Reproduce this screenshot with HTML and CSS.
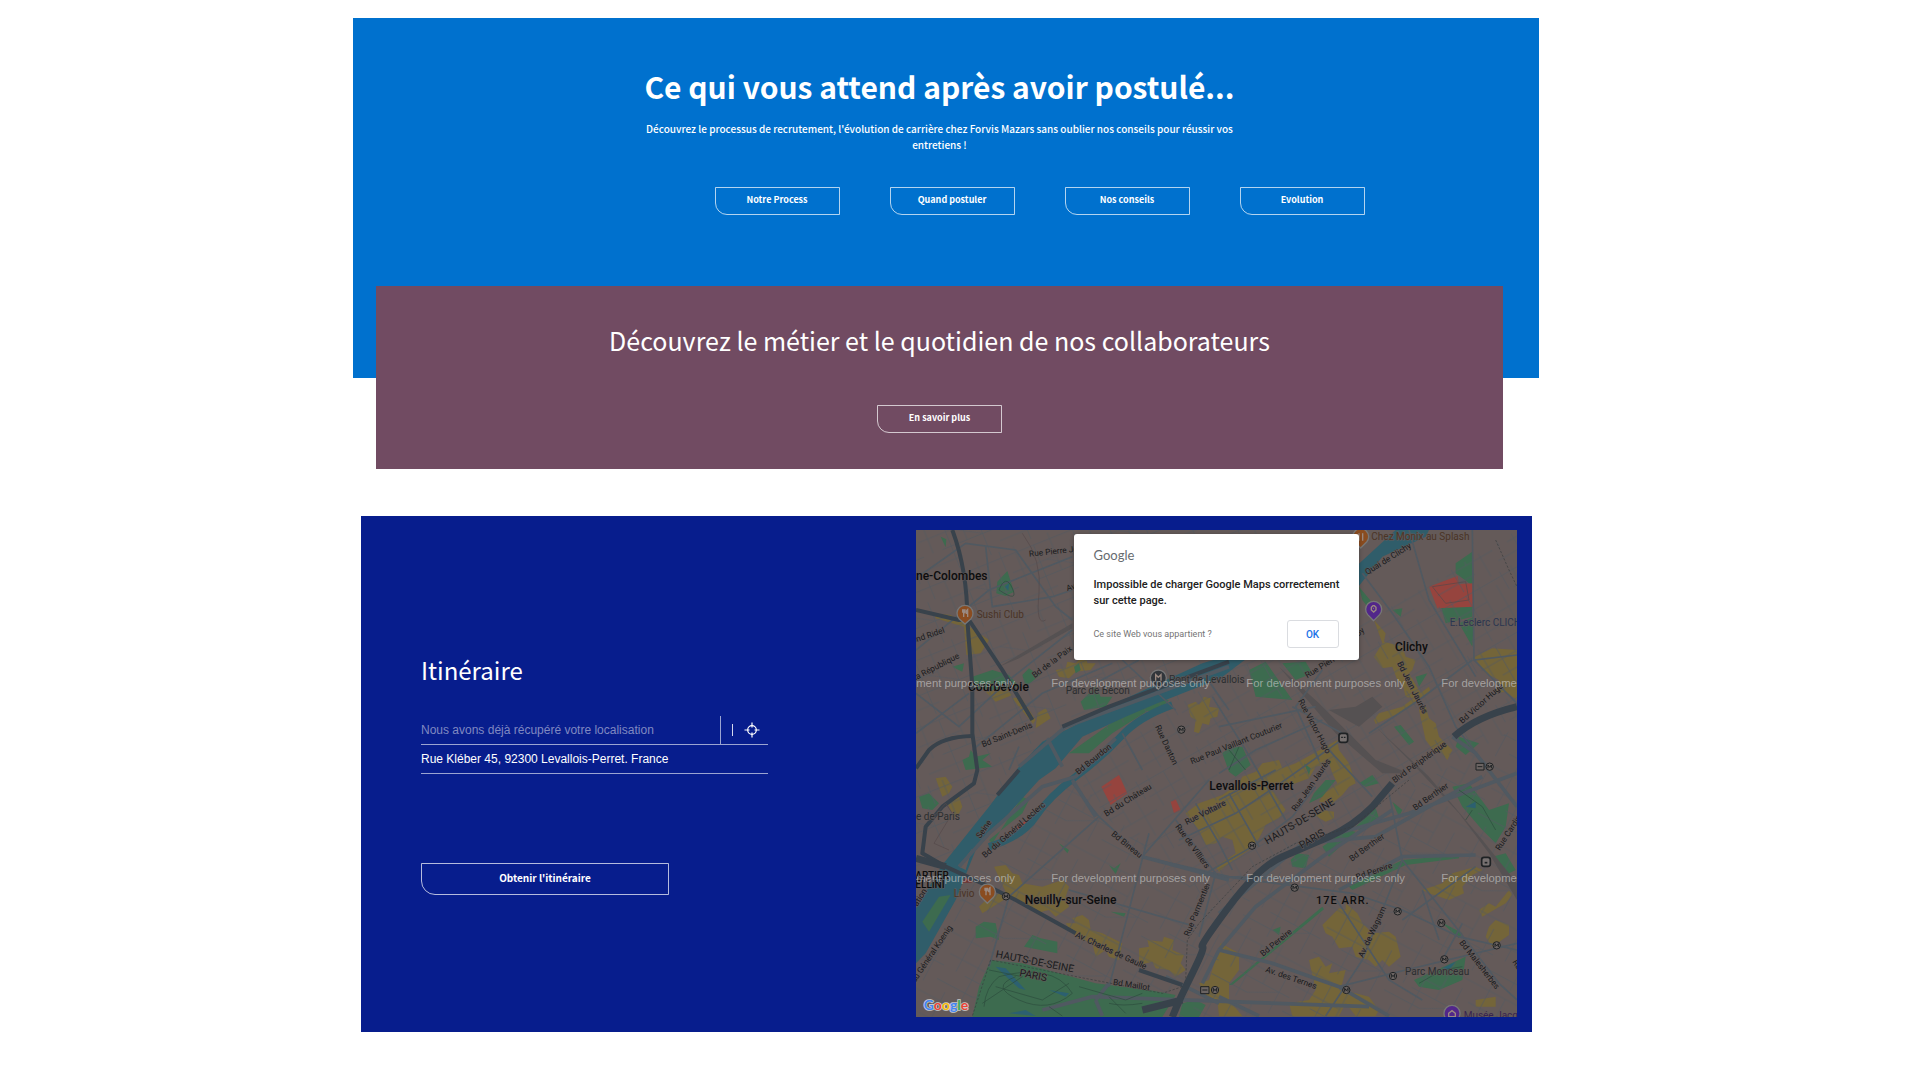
FILE: index.html
```html
<!DOCTYPE html>
<html lang="fr">
<head>
<meta charset="utf-8">
<meta name="viewport" content="width=device-width, initial-scale=1">
<title>Forvis Mazars – Après avoir postulé</title>
<link rel="stylesheet" href="styles.css">
</head>
<body>
<main class="page">
  <section class="hero">
    <div class="hero-inner">
      <h1 class="hero-title">Ce qui vous attend après avoir postulé...</h1>
      <p class="hero-text">Découvrez le processus de recrutement, l'évolution de carrière chez Forvis Mazars sans oublier nos conseils pour réussir vos entretiens !</p>
      <nav class="hero-links">
        <a class="btn" href="#process">Notre Process</a>
        <a class="btn" href="#postuler">Quand postuler</a>
        <a class="btn" href="#conseils">Nos conseils</a>
        <a class="btn" href="#evolution">Evolution</a>
      </nav>
    </div>
  </section>

  <section class="jobs">
    <h2 class="jobs-title">Découvrez le métier et le quotidien de nos collaborateurs</h2>
    <a class="btn" href="#metiers">En savoir plus</a>
  </section>

  <section class="route">
    <form class="route-form">
      <h2 class="route-title">Itinéraire</h2>
      <div class="field">
        <input class="field-input" type="text" aria-label="Point de départ" placeholder="Nous avons déjà récupéré votre localisation">
        <button class="locate" type="button" aria-label="Me localiser">
          <span class="locate-bar"></span>
          <svg class="locate-icon" viewBox="0 0 16 16" fill="none" stroke="currentColor" stroke-width="1.2"><circle cx="8" cy="8" r="4.3"/><path d="M8 .5v5M8 10.500v5M.5 8h5M10.500 8h5"/></svg>
        </button>
      </div>
      <p class="address">Rue Kléber 45, 92300 Levallois-Perret. France</p>
      <button class="btn btn-wide" type="button">Obtenir l'itinéraire</button>
    </form>

    <div class="map">
      <svg class="map-canvas" viewBox="21 30 1803 1461" preserveAspectRatio="xMidYMid slice">
        <defs>
          <pattern id="streets-a" width="230" height="190" patternUnits="userSpaceOnUse" patternTransform="rotate(-22)">
            <path class="minor" d="M0 20H230M0 74H140M60 120H230M0 160H110M30 0V120M88 20V190M140 0V120M190 60V190M214 0V60M110 74L190 120"/>
          </pattern>
          <pattern id="streets-b" width="210" height="170" patternUnits="userSpaceOnUse" patternTransform="rotate(-30)">
            <path class="minor" d="M0 14H210M0 60H120M50 104H210M0 140H130M24 0V104M74 14V170M120 0V104M168 30V170M196 0V60"/>
          </pattern>
          <pattern id="streets-c" width="240" height="200" patternUnits="userSpaceOnUse" patternTransform="rotate(28)">
            <path class="minor" d="M0 30H240M0 90H150M70 130H240M0 175H120M40 0V130M95 30V200M150 0V130M205 60V200M120 175L205 130"/>
          </pattern>
          <g id="metro"><circle r="11"/><path d="M-5 5V-5L0 2L5-5V5"/></g>
        </defs>

        <rect class="land" x="21" y="30" width="1803" height="1461"/>

        <g class="shop">
          <path d="M75 280L125 285L165 310L240 360L215 400L172 405L165 320L80 295ZM440 450L470 445L475 425L500 430L530 400L535 430L560 430L545 450L500 455L480 475L450 470ZM385 580L410 565L425 595L380 625Z"/>
          <path d="M230 515L290 505L310 525L260 545ZM310 535L335 530L380 600L372 612ZM835 555L860 545L870 555L885 530L905 535L900 560L930 565L925 590L905 595L900 615L880 610L870 640L855 635L860 600L845 590Z"/>
          <path d="M1395 300L1430 340L1425 365L1480 380L1490 410L1520 420L1510 450L1500 460L1535 520L1510 535L1490 530L1480 490L1465 480L1450 440L1420 445L1395 410L1420 370Z"/>
          <path d="M1530 570L1550 560L1560 595L1580 610L1590 650L1630 690L1615 720L1590 690L1580 700L1550 660ZM1395 600L1410 580L1480 560L1560 500L1565 515L1480 575L1400 612Z"/>
          <path d="M1695 410L1750 385L1824 390V540L1790 515L1760 520L1770 480L1730 460Z"/>
          <path d="M830 880L870 850L940 825L990 790L1000 770L1040 755L1060 730L1110 720L1120 745L1160 730L1250 680L1285 660L1290 690L1320 730L1340 790L1320 800L1300 825L1270 850L1230 845L1245 820L1285 790L1270 760L1260 730L1220 740L1200 775L1160 790L1130 800L1110 790L1090 810L1130 870L1110 895L1070 915L1050 955L1020 990L960 1030L930 1055L920 1040L980 1000L970 960L940 950L920 970L890 975L870 930Z"/>
          <path d="M1215 885L1240 870L1275 875L1275 895L1250 905ZM80 775L110 770L130 800L120 820L100 830ZM115 850L150 830L160 860L140 900Z"/>
          <path d="M255 1040L290 1035L310 1060L330 1065L340 1090L400 1100L460 1080L480 1100L470 1130L480 1160L440 1190L420 1170L380 1180L340 1150L300 1130L220 1180L210 1160L240 1130L290 1115ZM470 1210L500 1210L490 1195L520 1185L540 1200L545 1230L580 1240L640 1270L630 1320L600 1310L590 1290L560 1310L550 1270L500 1250Z"/>
          <path d="M690 1285L720 1280L715 1260L760 1265L765 1250L795 1260L790 1290L825 1305L815 1330L830 1350L800 1370L780 1350L740 1345L730 1325L690 1335Z"/>
          <path d="M935 1270L990 1300V1350L960 1390L960 1440L1000 1488H930L925 1440L895 1430L870 1390L900 1380Z"/>
          <path d="M1240 1215L1290 1165L1310 1170L1310 1150L1345 1180L1360 1210L1390 1240L1440 1235L1460 1250L1475 1310L1440 1340L1420 1320L1400 1340L1380 1320L1340 1310L1330 1280L1290 1285L1270 1250L1250 1240Z"/>
          <path d="M1200 1320L1230 1310L1250 1340L1270 1330L1260 1360L1310 1350L1300 1390L1290 1410L1340 1420L1380 1430L1410 1470L1400 1488H1340L1310 1450L1290 1488H1150L1140 1450L1200 1440L1220 1410Z"/>
          <path d="M1540 1110L1600 1090L1630 1060L1700 1040L1720 1050L1690 1065L1660 1100L1665 1120L1620 1140L1560 1120ZM1710 1170L1740 1150L1760 1160L1800 1110L1810 1125L1790 1150L1720 1190ZM1740 1220L1760 1200L1800 1215L1800 1245L1750 1280L1730 1250ZM1700 1440L1760 1430V1460H1700Z"/>
        </g>

        <g class="park">
          <path d="M265 185L295 153L315 215L290 228L262 220ZM95 50L112 58L110 82ZM190 470L250 450L300 465L330 500L260 510L200 505ZM340 465L360 445L380 460L400 460L350 500ZM495 440L510 430L515 450L500 460Z"/>
          <path d="M515 545L560 500L575 530L610 530L590 560L525 570ZM480 700L620 600L730 530L735 560L610 640L540 700ZM680 560L720 535L780 540L740 580ZM160 720L180 710L185 690L200 710L245 700L220 720L250 740L170 750ZM130 440L165 430L160 455Z"/>
          <path d="M1640 130L1690 95L1695 200L1640 160ZM1590 240L1690 232V290L1610 310ZM1650 310L1695 290L1690 380ZM1020 450L1070 425L1150 540L1040 530ZM1120 430L1190 425L1210 460L1160 480ZM1350 200L1400 260L1390 280L1360 240ZM1450 270L1480 265L1475 290Z"/>
          <path d="M1455 620L1475 615L1515 665L1500 675ZM1650 650L1710 670L1670 705L1640 680ZM1520 470L1555 460L1530 500ZM940 700L965 680L1000 680L1025 735L980 770L960 755Z"/>
          <path d="M250 970L340 830L360 840L340 880L240 960ZM40 1200L90 1130L125 1125L60 1235ZM200 1220L225 1205L260 1210L270 1260L245 1250L200 1255ZM345 1280L370 1245L395 1255L445 1265L445 1300ZM450 970L480 990L475 1000ZM600 1035L615 1045L635 1030L620 1062ZM605 1175L650 1180L645 1190Z"/>
          <path d="M245 1320L340 1330L560 1390L720 1410L800 1425L760 1491H190L210 1400ZM820 1450L860 1440L890 1455L870 1491H810Z"/>
          <path d="M1200 850L1215 820L1250 780L1280 780L1240 830ZM1350 790L1390 765L1410 790L1370 800ZM1240 980L1310 930L1340 935L1260 1010ZM1340 920L1400 865L1410 895L1350 930ZM1145 1020L1165 1000L1200 1005L1190 1045L1150 1040Z"/>
          <path d="M1630 800L1680 790L1740 870L1800 850L1790 920L1760 970L1720 930L1660 860ZM1750 1010L1790 1000L1820 1050L1790 1065ZM1515 1380L1670 1310L1660 1380L1590 1410L1530 1400ZM1595 1205L1660 1240L1650 1255ZM1090 1230L1115 1220L1110 1245Z"/>
          <path d="M1320 1100L1400 1060L1480 1020L1650 1005V1015L1490 1035L1330 1110ZM960 1395L1240 1160L1245 1168L970 1395ZM1450 845L1480 870L1470 890Z"/>
          <path d="M30 830L60 820L90 850L70 870L40 865ZM1185 730L1205 745L1200 765ZM21 1260L35 1250L30 1290Z"/>
        </g>

        <g class="red">
          <path d="M1560 200L1645 168L1650 192L1695 190V260L1585 265ZM577 800L630 765L655 820L605 855ZM320 920L365 895L370 915L340 940ZM785 845L800 838L815 870L795 880Z"/>
          <path class="red-dim" d="M130 1070H188V1088H140Z"/>
        </g>

        <path fill="url(#streets-a)" d="M21 30H1080V430L420 700L330 800L21 1140Z"/>
        <path fill="url(#streets-b)" d="M960 450L1330 330L1824 30V620L1300 930L930 1180L600 900L500 770Z"/>
        <path fill="url(#streets-c)" d="M500 780L930 1180L1300 930L1824 620V1491H780L800 1425L245 1320L190 1491H21V1340L240 1010Z"/>

        <g class="water">
          <path d="M1340 140L1460 30H1560L1550 50L1420 110L1340 210L1240 260L1000 425L935 475L745 550L650 590L520 650L440 745L390 780L300 880L200 990L140 1140L50 1300L21 1330V1165L100 1035L240 860L330 740L400 665L500 615L640 540L880 430L1050 380L1240 230Z"/>
          <path class="branch" d="M790 555Q690 590 635 650T500 770T380 890T240 980"/>
          <path class="pond" d="M260 1340L290 1345L350 1410L330 1405ZM420 1410L480 1420L470 1430ZM300 1480L350 1470L380 1488ZM1670 860L1700 845V865ZM1600 1345L1640 1325L1620 1350ZM288 200L300 190L298 212Z"/>
        </g>
        <path class="island" d="M150 1040L190 985L170 1050Z"/>
        <path class="park" d="M40 1205L90 1130L125 1125L60 1235Z"/>

        <g class="rail">
          <path d="M1110 440L1230 550L1400 720L1500 760H1420L1280 640ZM1260 570L1340 560L1390 530L1420 560L1350 620ZM1400 620L1500 720L1650 880L1740 1000L1824 1140V1090L1720 960L1560 770Z"/>
          <path d="M270 440L490 310V325L330 415Z"/>
        </g>

        <g class="road">
          <path d="M21 175L170 70L320 90L440 260L490 300M230 80L250 260L430 230L490 210M21 390L240 210L490 110M21 520L150 620L300 480L490 330"/>
          <path d="M190 690L400 520L610 430M640 420L800 570M640 640L700 750M890 470L960 570M690 420L560 490M330 680L300 750M21 640L180 520"/>
          <path d="M1500 30L1560 240L1700 470M1690 30L1695 420L1824 405M1690 420L1530 540L1380 640M1695 420L1824 550M1360 160L1450 280L1560 440L1640 620L1740 750M930 620L1220 560M930 760L1040 690L1240 600"/>
          <path d="M1240 450L1160 560L1230 720M1150 560L1300 640M1260 690L1390 830M910 530L1010 690L1130 900M960 820L1050 980"/>
          <path d="M810 960L980 880L1100 800L1290 665M890 1060L1030 980L1150 890L1220 800M860 850L930 970L970 1050M930 840L1100 750"/>
          <path d="M490 790L570 890L700 1010L960 1070L1260 1080M700 1010L900 780M570 890L300 1130M720 940L600 1400M300 1130L240 1340M480 1110L860 1220"/>
          <path d="M800 900L920 1060L870 1250M870 1060L1330 1120L1480 1170L1650 1250L1824 1290"/>
          <path d="M1440 820L1480 1020L1360 1320L1250 1488M1270 1120L1440 1380L1540 1440M1480 1020L1640 1220L1770 1390L1824 1440"/>
          <path d="M1290 1400L1490 1350L1824 1270M1480 1200L1700 1040M1600 1320L1660 1210M1540 1110L1590 1260"/>
        </g>
        <g class="road wide">
          <path d="M415 655L460 740M930 1290L1090 1330L1290 1400L1440 1488M930 1180L1180 970L1500 880L1824 760M1180 970L1400 950L1720 770M930 1290L880 1390M930 1430L1050 1488M700 1010L960 1080"/>
          <path d="M330 740L470 620L960 440M1450 870L1240 1010L1040 1160L930 1290M1380 1460L550 1430L400 1470M560 1440L600 1390M560 1440L580 1488M1630 650L1700 700L1824 860M1290 1110L1480 1010L1700 1005"/>
          <path d="M150 1040L240 940L400 800L500 770L620 655M770 1370L930 1450M490 780L560 890"/>
        </g>
        <g class="highway">
          <path d="M130 30Q175 150 175 300L190 500V640L205 750L195 790L100 860L50 920L40 1000L110 1040L220 1090L320 1140L500 1240"/>
          <path d="M21 270L150 300H180L280 450L370 600M460 620L600 560L960 425M190 648Q100 650 60 690L21 745M690 1350L820 1395M265 825L330 750"/>
        </g>
        <g class="highway ring">
          <path d="M1824 560Q1700 590 1635 650M1450 790L1390 860Q1330 920 1260 950T1120 1010T960 1160T880 1280T850 1360T790 1491M700 1470L820 1440M21 1015L110 1040"/>
        </g>
        <g class="border">
          <path d="M1760 60L1800 150L1824 200M1500 780L1330 920L1160 970L1030 1040L870 1210L835 1260L830 1380M820 1400L760 1420L245 1320L190 1488"/>
        </g>
        <g class="path">
          <path d="M225 1460Q230 1400 270 1370Q340 1350 400 1360T490 1420Q420 1480 330 1440T320 1370M510 1400L650 1440L700 1420M420 1460L460 1488M600 1430L650 1480M240 1350L340 1370L220 1450M270 210Q290 160 310 205T270 210M1530 1390L1600 1350L1660 1340M960 690L1010 750M990 680L960 750"/>
          <path d="M1650 810L1720 860L1760 930M1690 870L1670 900M600 1450Q640 1460 700 1450M260 1400L400 1440L480 1390"/>
        </g>
        <path class="track" d="M1570 200L1670 185L1680 240L1610 250ZM340 40Q400 120 390 220T410 300M65 900L110 850L130 880L75 970L120 990"/>

        <g class="stations">
          <use href="#metro" x="817" y="629"/><use href="#metro" x="291" y="1129"/><use href="#metro" x="1029" y="977"/><use href="#metro" x="1157" y="1103"/>
          <use href="#metro" x="1466" y="1174"/><use href="#metro" x="1597" y="1209"/><use href="#metro" x="1763" y="1276"/><use href="#metro" x="1606" y="1318"/>
          <use href="#metro" x="1452" y="1368"/><use href="#metro" x="1312" y="1410"/><use href="#metro" x="918" y="1410"/><use href="#metro" x="1742" y="740"/>
          <path d="M875 1400H900V1421H875ZM880 1410H895M1701 730H1725V750H1701ZM1706 740H1720"/>
          <g class="train"><rect x="1290" y="640" width="26" height="27" rx="7"/><path d="M1299 650V654M1307 650V654"/><rect x="1718" y="1012" width="26" height="27" rx="7"/><path d="M1727 1028H1735"/></g>
        </g>

        <g class="pins">
          <path fill="#8a4c20" d="M168 312L150 296A24 24 0 1 1 186 296Z"/>
          <path fill="#8a4c20" d="M235 1150L217 1132A24 24 0 1 1 253 1132Z"/>
          <path fill="#8a4c20" d="M1355 84L1337 66A24 24 0 1 1 1373 66Z"/>
          <path fill="#52268a" d="M1394 302L1376 284A24 24 0 1 1 1412 284Z"/>
          <path fill="#52268a" d="M1629 1514L1611 1496A24 24 0 1 1 1647 1496Z"/>
          <path fill="#31363b" d="M748 508L730 490A24 24 0 1 1 766 490Z"/>
          <path class="glyph" d="M161 268V276Q166 281 168 276V268M164 268V291M176 291V268Q171 271 172 280H176M228 1103V1111Q233 1116 235 1111V1103M231 1103V1126M243 1126V1103Q238 1106 239 1115H243M1350 40V62M1361 62V40"/>
          <path class="glyph" d="M1387 270V262L1392 257H1396L1401 262V270L1394 276ZM1393 265H1395M1619 1480L1629 1472L1639 1480V1490H1619ZM740 482V464L748 472L756 464V482"/>
        </g>

        <g class="label">
          <text x="361" y="110" transform="rotate(-6 361 110)">Rue Pierre Joigneaux</text>
          <text x="475" y="214" transform="rotate(-18 475 214)">Av. de l'Europe</text>
          <text x="-10" y="378" transform="rotate(-19 -10 378)">mond Ridel</text>
          <text x="2" y="490" transform="rotate(-27 2 490)">e la République</text>
          <text x="377" y="475" transform="rotate(-37 377 475)">Bd de la Paix</text>
          <text x="222" y="682" transform="rotate(-22 222 682)">Bd Saint-Denis</text>
          <text x="508" y="765" transform="rotate(-39 508 765)">Bd Bourdon</text>
          <text x="738" y="620" transform="rotate(65 738 620)">Rue Danton</text>
          <text x="848" y="733" transform="rotate(-22 848 733)">Rue Paul Vaillant Couturier</text>
          <text x="1375" y="165" transform="rotate(-32 1375 165)">Quai de Clichy</text>
          <text x="1195" y="475" transform="rotate(-32 1195 475)">Rue Pierre</text>
          <text x="1348" y="350" transform="rotate(-40 1348 350)">oy</text>
          <text x="1464" y="430" transform="rotate(63 1464 430)">Bd Jean Jaurès</text>
          <text x="1167" y="543" transform="rotate(62 1167 543)">Rue Victor Hugo</text>
          <text x="1660" y="612" transform="rotate(-42 1660 612)">Bd Victor Hugo</text>
          <text x="1457" y="790" transform="rotate(-36 1457 790)">Blvd Périphérique</text>
          <text x="1160" y="875" transform="rotate(-55 1160 875)">Rue Jean Jaurès</text>
          <text x="228" y="1015" transform="rotate(-41 228 1015)">Bd du Général Leclerc</text>
          <text x="592" y="890" transform="rotate(-32 592 890)">Bd du Château</text>
          <text x="605" y="945" transform="rotate(39 605 945)">Bd Bineau</text>
          <text x="833" y="915" transform="rotate(-27 833 915)">Rue Voltaire</text>
          <text x="798" y="920" transform="rotate(54 798 920)">Rue de Villiers</text>
          <text x="840" y="1250" transform="rotate(-68 840 1250)">Rue Parmentier</text>
          <text x="214" y="957" transform="rotate(-55 214 957)">Seine</text>
          <text x="18" y="1390" transform="rotate(-56 18 1390)">du Général Koenig</text>
          <text x="25" y="1160" transform="rotate(-58 25 1160)">ation</text>
          <text x="497" y="1250" transform="rotate(25 497 1250)">Av. Charles de Gaulle</text>
          <text x="611" y="1394" transform="rotate(9 611 1394)">Bd Maillot</text>
          <text x="1519" y="872" transform="rotate(-35 1519 872)">Bd Berthier</text>
          <text x="1328" y="1025" transform="rotate(-36 1328 1025)">Bd Berthier</text>
          <text x="1344" y="1080" transform="rotate(-19 1344 1080)">Bd Pereire</text>
          <text x="1062" y="1310" transform="rotate(-39 1062 1310)">Bd Pereire</text>
          <text x="1362" y="1314" transform="rotate(-65 1362 1314)">Av. de Wagram</text>
          <text x="1068" y="1355" transform="rotate(19 1068 1355)">Av. des Ternes</text>
          <text x="1650" y="1268" transform="rotate(52 1650 1268)">Bd Malesherbes</text>
          <text x="1772" y="993" transform="rotate(-57 1772 993)">Rue Cardinet</text>
          <text x="1810" y="1325" transform="rotate(60 1810 1325)">Rue</text>
        </g>
        <g class="label poi">
          <text class="food" x="203" y="294">Sushi Club</text>
          <text class="food" x="1387" y="61">Chez Monix au Splash</text>
          <text class="food" x="134" y="1130">Livio</text>
          <text class="store" x="1622" y="317">E.Leclerc CLICHY</text>
          <text x="470" y="521">Parc de Bécon</text>
          <text x="780" y="488">Pont de Levallois</text>
          <text x="21" y="901">e de Paris</text>
          <text x="1488" y="1364">Parc Monceau</text>
          <text class="museum" x="1664" y="1496">Musée Jacquemart</text>
        </g>
        <g class="label district">
          <text x="259" y="1312" transform="rotate(11 259 1312)">HAUTS-DE-SEINE</text>
          <text x="330" y="1368" transform="rotate(11 330 1368)">PARIS</text>
          <text x="1075" y="974" transform="rotate(-31 1075 974)">HAUTS-DE-SEINE</text>
          <text x="1178" y="987" transform="rotate(-31 1178 987)">PARIS</text>
        </g>
        <g class="label town">
          <text x="21" y="181">ne-Colombes</text>
          <text x="177" y="513">Courbevoie</text>
          <text x="1458" y="392">Clichy</text>
          <text x="901" y="810">Levallois-Perret</text>
          <text x="347" y="1151">Neuilly-sur-Seine</text>
          <text class="arr" x="1221" y="1152">17E ARR.</text>
          <text class="quarter" x="19" y="1076">ARTIER</text>
          <text class="quarter" x="19" y="1104">ELLINI</text>
        </g>
        <g class="watermark">
          <text x="-158" y="500">For development purposes only</text>
          <text x="427" y="500">For development purposes only</text>
          <text x="1012" y="500">For development purposes only</text>
          <text x="1597" y="500">For development purposes only</text>
          <text x="-158" y="1086">For development purposes only</text>
          <text x="427" y="1086">For development purposes only</text>
          <text x="1012" y="1086">For development purposes only</text>
          <text x="1597" y="1086">For development purposes only</text>
        </g>
        <text class="map-logo" x="44" y="1471"><tspan fill="#4285f4">G</tspan><tspan fill="#ea4335">o</tspan><tspan fill="#fbbc05">o</tspan><tspan fill="#4285f4">g</tspan><tspan fill="#34a853">l</tspan><tspan fill="#ea4335">e</tspan></text>
      </svg>

      <div class="dialog" role="alertdialog" aria-label="Google Maps">
        <div class="dialog-logo">Google</div>
        <p class="dialog-text">Impossible de charger Google Maps correctement<br>sur cette page.</p>
        <div class="dialog-foot">
          <a class="dialog-link" href="#proprietaire">Ce site Web vous appartient ?</a>
          <button class="dialog-ok" type="button">OK</button>
        </div>
      </div>
    </div>
  </section>
</main>
</body>
</html>
```
FILE: styles.css
```css
* { box-sizing: border-box; }

body {
  margin: 0;
  background: #fff;
  color: #fff;
  font-family: "Noto Sans CJK JP", "Noto Sans", sans-serif;
}

h1, h2, p { margin: 0; font-weight: 400; }

.page {
  max-width: 1214px;
  margin: 0 auto;
  padding: 18px 28px 48px 0;
}

.hero {
  background: #0071ce;
  padding: 44px 36px 0 23px;
  min-height: 360px;
}

.hero-inner {
  display: flex;
  flex-direction: column;
  align-items: center;
  text-align: center;
}

.hero-title {
  font-size: 30px;
  line-height: 48px;
  font-weight: 700;
}

.hero-text {
  max-width: 600px;
  margin-top: 11px;
  font-size: 10px;
  line-height: 16px;
  font-weight: 500;
}

.hero-links {
  display: flex;
  flex-wrap: wrap;
  gap: 50px;
  margin-top: 34px;
  padding-left: 200px;
}

.btn {
  display: flex;
  align-items: center;
  justify-content: center;
  width: 125px;
  height: 28px;
  padding: 0 0 3px;
  border: 1px solid rgba(255, 255, 255, .7);
  border-radius: 0 0 0 12px;
  background: transparent;
  color: #fff;
  font-family: inherit;
  font-size: 9px;
  line-height: 16px;
  font-weight: 700;
  text-decoration: none;
}

.jobs {
  position: relative;
  display: flex;
  flex-direction: column;
  align-items: center;
  gap: 45px;
  margin: -92px 36px 0 23px;
  padding: 34px 16px 36px;
  background: #714b62;
}

.jobs-title {
  font-size: 25px;
  line-height: 40px;
  text-align: center;
}

.route {
  display: grid;
  grid-template-columns: minmax(0, 1fr) minmax(0, 601px);
  align-items: center;
  margin: 47px 7px 0 8px;
  padding: 14px 15px 15px 60px;
  background: #071d8d;
}

.route-form { max-width: 347px; }

.route-title {
  font-size: 24px;
  line-height: 36px;
}

.field {
  display: flex;
  height: 29px;
  margin-top: 28px;
  border-bottom: 1px solid rgba(255, 255, 255, .6);
}

.field-input {
  flex: 1;
  min-width: 0;
  padding: 0;
  border: 0;
  background: transparent;
  color: #fff;
  font-family: "Liberation Sans", Arial, sans-serif;
  font-size: 12px;
}

.field-input::placeholder { color: #8089c1; opacity: 1; }

.locate {
  display: flex;
  align-items: center;
  gap: 11px;
  width: 48px;
  padding: 0 0 0 11px;
  border: 0;
  border-left: 1px solid rgba(255, 255, 255, .6);
  background: transparent;
  color: #fff;
}

.locate-bar {
  width: 1px;
  height: 12px;
  background: #d5d9ee;
}

.locate-icon { width: 16px; height: 16px; }

.address {
  height: 29px;
  border-bottom: 1px solid rgba(255, 255, 255, .6);
  font-family: "Liberation Sans", Arial, sans-serif;
  font-size: 12px;
  line-height: 28px;
}

.btn-wide {
  width: 248px;
  height: 32px;
  margin-top: 89px;
  border-radius: 0 0 0 14px;
  font-size: 10px;
}

.map {
  position: relative;
  min-height: 487px;
  overflow: hidden;
  background: #645a59;
}

.map-canvas {
  display: block;
  width: 100%;
  height: 487px;
  font-family: Roboto, sans-serif;
}

.land { fill: #645a59; }
.minor { fill: none; stroke: #535960; stroke-width: 2; }
.shop { fill: #746539; }
.park { fill: #3d6b4f; }
.red { fill: #96443e; }
.red-dim { fill: #6c3534; }
.water { fill: #305d6a; }
.branch { fill: none; stroke: #305d6a; stroke-width: 22; }
.pond { fill: #2c6070; }
.island { fill: #645a59; }
.rail { fill: #555152; }
.road { fill: none; stroke: #505961; stroke-width: 5; }
.wide { stroke-width: 11; }
.highway { fill: none; stroke: #38424b; stroke-width: 12; stroke-linejoin: round; }
.ring { stroke-width: 21; }
.border { fill: none; stroke: #383c3e; stroke-width: 2; stroke-dasharray: 7 5; }
.path { fill: none; stroke: #2c4c3c; stroke-width: 2; }
.track { fill: none; stroke: #54494a; stroke-width: 2; }

.stations { fill: #6b6462; stroke: #1f2224; stroke-width: 3; }
.train { fill: #777170; stroke-width: 5; }
.pins { stroke: #777; stroke-width: 4; }
.glyph { fill: none; stroke: #9a8980; stroke-width: 4; }

.label {
  font-size: 25px;
  fill: #191b1d;
  stroke: #645a59;
  stroke-width: 3;
  paint-order: stroke;
}
.poi { font-size: 30px; fill: #2b2e30; }
.food { fill: #4a3426; }
.store { fill: #2b3650; }
.museum { fill: #392450; }
.district { font-size: 31px; }
.town { font-size: 36px; font-weight: 500; fill: #0c0d0e; }
.arr { font-size: 33px; letter-spacing: 3px; }
.quarter { font-size: 30px; }

.watermark {
  font-family: "Liberation Sans", Arial, sans-serif;
  font-size: 34px;
  fill: rgba(210, 210, 210, .6);
}

.map-logo {
  font-family: Lato, sans-serif;
  font-size: 42px;
  font-weight: 700;
  stroke: #c9c9c9;
  stroke-width: 5;
  paint-order: stroke;
}

.dialog {
  position: absolute;
  top: 4px;
  left: 50%;
  width: 285px;
  margin-left: -143px;
  padding: 11px 20px 12px;
  border-radius: 3px;
  background: #fff;
  box-shadow: 0 1px 4px rgba(0, 0, 0, .3);
  font-family: Roboto, sans-serif;
}

.dialog-logo {
  color: #666b70;
  font-family: Lato, sans-serif;
  font-size: 13px;
  line-height: 20px;
}

.dialog-text {
  margin-top: 12px;
  color: #212121;
  font-size: 11px;
  line-height: 16px;
  font-weight: 500;
  white-space: nowrap;
}

.dialog-foot {
  display: flex;
  align-items: center;
  justify-content: space-between;
  margin-top: 11px;
}

.dialog-link {
  color: #757575;
  font-size: 9px;
  text-decoration: none;
}

.dialog-ok {
  width: 52px;
  height: 28px;
  padding: 0;
  border: 1px solid #dadce0;
  border-radius: 3px;
  background: #fff;
  color: #1a73e8;
  font-family: inherit;
  font-size: 10px;
  font-weight: 500;
}
```
